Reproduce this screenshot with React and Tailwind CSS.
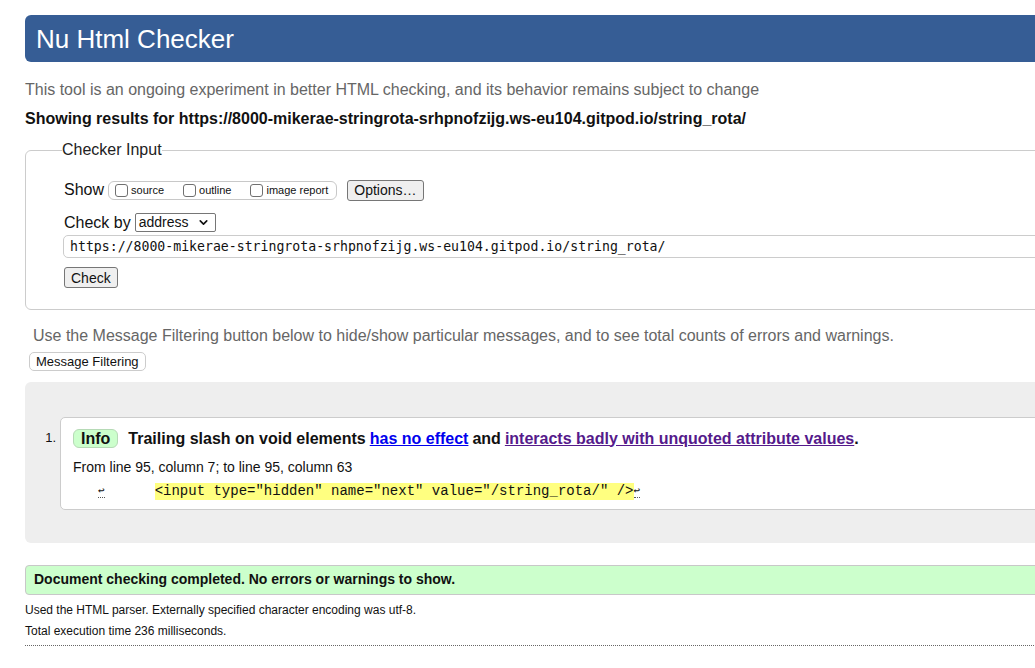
import { ChevronDown } from 'lucide-react'

const sans = { fontFamily: '"Liberation Sans", Arial, sans-serif' }

function Box({ label }) {
  return (
    <span className="inline-flex items-center">
      <span className="inline-block h-[13px] w-[13px] rounded-[3px] border border-[#707070] bg-white" />
      <span className="ml-[3px] text-[11px]">{label}</span>
    </span>
  )
}

function Header() {
  return (
    <div className="flex h-[47px] items-center rounded-l-[6px] bg-[#365d95] pl-[11px]">
      <h1 className="text-[26px] leading-none text-white">Nu Html Checker</h1>
    </div>
  )
}

function CheckerInput() {
  return (
    <fieldset className="mt-[13px] rounded-l-[6px] border border-[#cccccc] pb-[19px] pl-[38px]">
      <legend className="ml-[-2px] text-[16px] leading-[18px] text-[#222]">Checker Input</legend>
      <div className="mt-[21px] flex h-[20px] items-center">
        <span className="text-[16px]">Show</span>
        <span className="ml-[4px] flex h-[19px] items-center gap-[19px] rounded-[6px] border border-[#c8c8c8] pl-[6px] pr-[8px]">
          <Box label="source" />
          <Box label="outline" />
          <Box label="image report" />
        </span>
        <button className="ml-[10px] h-[21px] rounded-[3px] border border-[#767676] bg-[#efefef] px-[6px] text-[14px] leading-none">
          Options…
        </button>
      </div>
      <div className="mt-[13px] flex h-[19px] items-center">
        <span className="text-[16px]">Check by</span>
        <span className="ml-[4px] flex h-[19px] w-[81px] items-center justify-between rounded-[2px] border border-[#767676] bg-white pl-[3px] pr-[5px] text-[14px]">
          address
          <ChevronDown size={13} strokeWidth={3} />
        </span>
      </div>
      <div
        className="ml-[-1px] mt-[3px] flex h-[23px] items-center rounded-l-[5px] border border-[#cccccc] pl-[6px] text-[13.2px] text-[#111]"
        style={{ fontFamily: '"DejaVu Sans Mono", monospace' }}
      >
        https://8000-mikerae-stringrota-srhpnofzijg.ws-eu104.gitpod.io/string_rota/
      </div>
      <button className="mt-[9px] h-[21px] rounded-[3px] border border-[#767676] bg-[#efefef] px-[6px] text-[14px] leading-none">
        Check
      </button>
    </fieldset>
  )
}

function Message() {
  return (
    <div className="mt-[9px] rounded-l-[6px] bg-[#eeeeee] pb-[33px] pt-[35px]">
      <div className="flex">
        <span className="w-[31px] pt-[13px] text-right text-[13px] leading-[16px]">1.</span>
        <div className="ml-[4px] flex-1 rounded-l-[5px] border border-[#cccccc] bg-white pb-[9px] pl-[12px] pt-[11px]">
          <p className="flex items-center text-[16px] font-bold leading-[19px]">
            <span className="rounded-[6px] border border-[#b6dab6] bg-[#ccffcc] px-[7px] leading-[17px]">Info</span>
            <span className="ml-[10px]">Trailing slash on void elements</span>
            <span className="ml-[4px] text-[#0000ee] underline">has no effect</span>
            <span className="ml-[4px]">and</span>
            <span className="ml-[4px] text-[#551a8b] underline">interacts badly with unquoted attribute values</span>
            <span>.</span>
          </p>
          <p className="mt-[11px] text-[14px] leading-[16px]">From line 95, column 7; to line 95, column 63</p>
          <p className="mt-[8px] flex items-center text-[14px] leading-[17px]" style={{ fontFamily: '"Liberation Mono", monospace' }}>
            <span className="ml-[25px] border-b border-dotted border-[#555] text-[11px] leading-[12px]">↩</span>
            <span className="ml-[50px] whitespace-pre bg-[#ffff80]">{'<input type="hidden" name="next" value="/string_rota/" />'}</span>
            <span className="border-b border-dotted border-[#555] text-[11px] leading-[12px]">↩</span>
          </p>
        </div>
      </div>
    </div>
  )
}

export default function App() {
  return (
    <div className="h-[668px] w-[1035px] overflow-hidden bg-white text-[#111]" style={sans}>
      <div className="w-[1100px] pl-[25px] pt-[15px]">
        <Header />
        <p className="mt-[18px] text-[16px] leading-[19px] text-[#666]">
          This tool is an ongoing experiment in better HTML checking, and its behavior remains subject to change
        </p>
        <p className="mt-[10px] text-[16px] font-bold leading-[19px]">
          Showing results for https://8000-mikerae-stringrota-srhpnofzijg.ws-eu104.gitpod.io/string_rota/
        </p>
        <CheckerInput />
        <p className="ml-[8px] mt-[16px] text-[16px] leading-[19px] text-[#666]">
          Use the Message Filtering button below to hide/show particular messages, and to see total counts of errors and warnings.
        </p>
        <button className="ml-[4px] mt-[7px] h-[19px] rounded-[5px] border border-[#cccccc] bg-white px-[6px] text-[13px] leading-none">
          Message Filtering
        </button>
        <Message />
        <div className="mt-[22px] flex h-[30px] items-center rounded-l-[4px] border border-[#c8c8c8] bg-[#ccffcc] pl-[8px] text-[14px] font-bold">
          Document checking completed. No errors or warnings to show.
        </div>
        <p className="mt-[8px] text-[12px] leading-[14px]">Used the HTML parser. Externally specified character encoding was utf-8.</p>
        <p className="mt-[7px] text-[12px] leading-[14px]">Total execution time 236 milliseconds.</p>
        <div className="mt-[7px] border-t border-dotted border-[#666]" />
      </div>
    </div>
  )
}
